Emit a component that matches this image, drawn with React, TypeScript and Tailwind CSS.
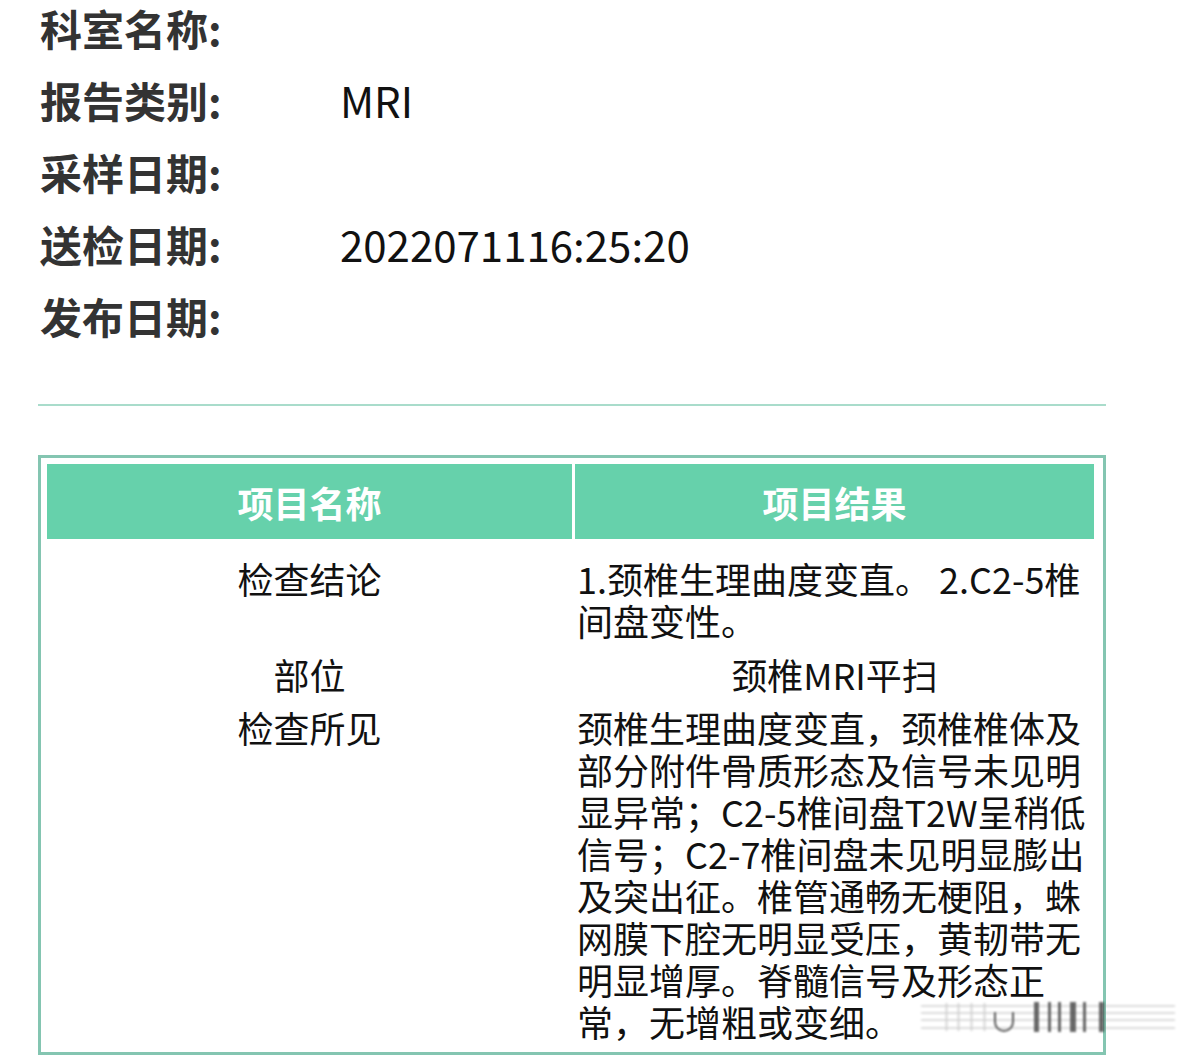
import React from "react";

const infoRows = [
  { label: "科室名称", value: "" },
  { label: "报告类别", value: "MRI" },
  { label: "采样日期", value: "" },
  { label: "送检日期", value: "2022071116:25:20" },
  { label: "发布日期", value: "" },
];

const conclusion = ["1.颈椎生理曲度变直。 2.C2-5椎", "间盘变性。"];

const findings = [
  "颈椎生理曲度变直，颈椎椎体及",
  "部分附件骨质形态及信号未见明",
  "显异常；C2-5椎间盘T2W呈稍低",
  "信号；C2-7椎间盘未见明显膨出",
  "及突出征。椎管通畅无梗阻，蛛",
  "网膜下腔无明显受压，黄韧带无",
  "明显增厚。脊髓信号及形态正",
  "常，无增粗或变细。",
];

const Watermark = () => (
  <svg
    className="absolute left-[915px] top-[998px] blur-[1px] opacity-80"
    width="265"
    height="40"
    viewBox="0 0 265 40"
  >
    {/* horizontal streaks */}
    {[8, 15, 22, 30].map((y) => (
      <line key={y} x1="6" y1={y} x2="260" y2={y} stroke="#9a9a9a" strokeWidth="1.5" opacity="0.55" />
    ))}
    {/* faint bars */}
    {[30, 42, 55, 68].map((x) => (
      <rect key={x} x={x} y="5" width="3" height="28" fill="#bbb" opacity="0.5" />
    ))}
    <path d="M80 14 v10 a9 9 0 0 0 18 0 v-10" stroke="#333" strokeWidth="2" fill="none" />
    {/* dark bars */}
    {[
      [119, 5],
      [133, 3],
      [143, 3],
      [155, 6],
      [168, 3],
      [184, 5],
    ].map(([x, w]) => (
      <rect key={x} x={x} y="4" width={w} height="30" fill="#222" opacity="0.85" />
    ))}
  </svg>
);

export default function App() {
  return (
    <div
      className="relative min-h-screen overflow-hidden bg-white"
      style={{ fontFamily: '"Noto Sans CJK SC", "Noto Sans", sans-serif' }}
    >
      {/* 基本信息 */}
      <div className="flex flex-col gap-[26px] pl-[40px] pt-[5px]">
        {infoRows.map((r) => (
          <div key={r.label} className="flex leading-[46px]">
            <div className="w-[300px] text-[42px] font-bold text-[#333]">{r.label}:</div>
            <div className="text-[42px] text-[#111]">{r.value}</div>
          </div>
        ))}
      </div>

      <div className="ml-[38px] mt-[65px] h-[2px] w-[1068px] bg-[#a9dccb]" />

      {/* 表格 */}
      <div className="ml-[38px] mt-[49px] w-[1068px] border-[3px] border-[#84c5b1] bg-white pb-[10px] pl-[6px] pr-[9px] pt-[6px]">
        <div className="grid grid-cols-[525px_519px] gap-x-[3px]">
          <div className="flex h-[75px] items-center justify-center bg-[#66d1ab] pt-[-2px] text-[36px] font-bold text-white">
            项目名称
          </div>
          <div className="flex h-[75px] items-center justify-center bg-[#66d1ab] text-[36px] font-bold text-white">
            项目结果
          </div>
        </div>

        <div className="grid grid-cols-[525px_519px] gap-x-[3px] pt-[18px] text-[36px] leading-[42px] text-[#111]">
          <div className="text-center">检查结论</div>
          <div className="pl-[2px]">
            {conclusion.map((l) => (
              <div key={l} className="whitespace-nowrap">{l}</div>
            ))}
          </div>
        </div>

        <div className="grid grid-cols-[525px_519px] gap-x-[3px] pt-[12px] text-[36px] leading-[42px] text-[#111]">
          <div className="text-center">部位</div>
          <div className="text-center">颈椎MRI平扫</div>
        </div>

        <div className="grid grid-cols-[525px_519px] gap-x-[3px] pt-[11px] text-[36px] leading-[42px] text-[#111]">
          <div className="text-center">检查所见</div>
          <div className="pl-[2px]">
            {findings.map((l) => (
              <div key={l} className="whitespace-nowrap">{l}</div>
            ))}
          </div>
        </div>
      </div>

      <Watermark />
    </div>
  );
}
